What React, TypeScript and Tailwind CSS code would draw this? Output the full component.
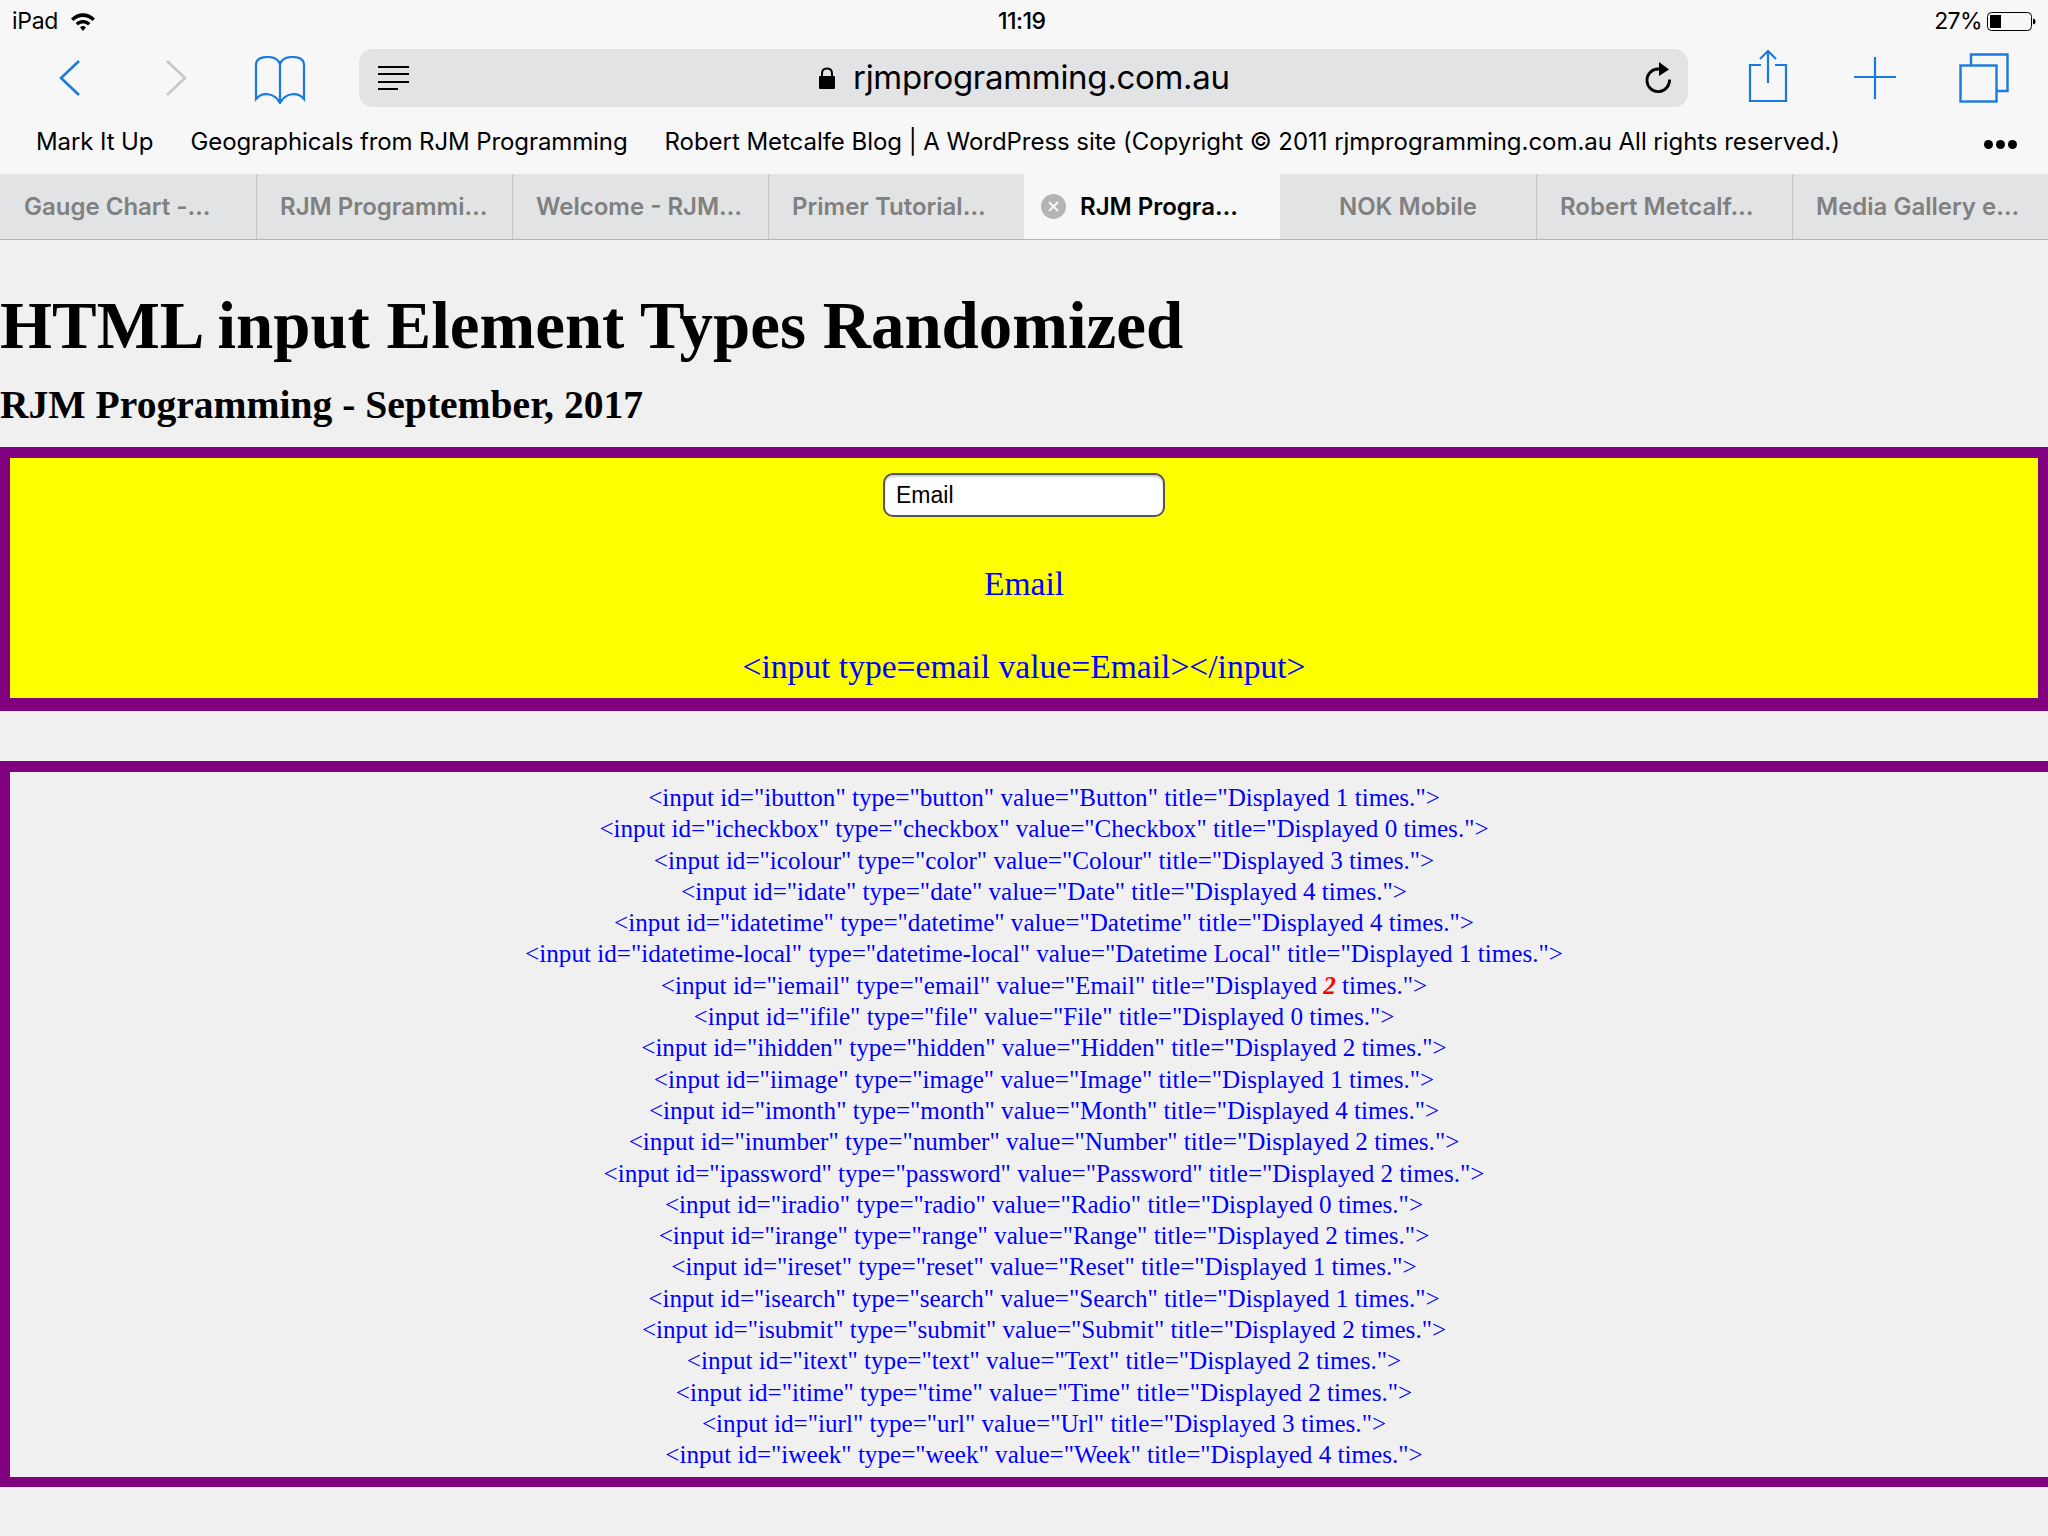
const rows: [string, string, string, string, string][] = [
  ["ibutton", "button", "Button", "1", ""],
  ["icheckbox", "checkbox", "Checkbox", "0", ""],
  ["icolour", "color", "Colour", "3", ""],
  ["idate", "date", "Date", "4", ""],
  ["idatetime", "datetime", "Datetime", "4", ""],
  ["idatetime-local", "datetime-local", "Datetime Local", "1", ""],
  ["iemail", "email", "Email", "2", "red"],
  ["ifile", "file", "File", "0", ""],
  ["ihidden", "hidden", "Hidden", "2", ""],
  ["iimage", "image", "Image", "1", ""],
  ["imonth", "month", "Month", "4", ""],
  ["inumber", "number", "Number", "2", ""],
  ["ipassword", "password", "Password", "2", ""],
  ["iradio", "radio", "Radio", "0", ""],
  ["irange", "range", "Range", "2", ""],
  ["ireset", "reset", "Reset", "1", ""],
  ["isearch", "search", "Search", "1", ""],
  ["isubmit", "submit", "Submit", "2", ""],
  ["itext", "text", "Text", "2", ""],
  ["itime", "time", "Time", "2", ""],
  ["iurl", "url", "Url", "3", ""],
  ["iweek", "week", "Week", "4", ""],
];

const tabs = [
  "Gauge Chart -…",
  "RJM Programmi…",
  "Welcome - RJM…",
  "Primer Tutorial…",
  "RJM Progra…",
  "NOK Mobile",
  "Robert Metcalf…",
  "Media Gallery e…",
];

const BLUE = "#1a7ae0";

export default function App() {
  return (
    <div className="w-[2048px] h-[1536px] overflow-hidden bg-[#f0f0f0] font-['Liberation_Serif',serif]">
      <div className="bg-[#f7f7f7] font-['Inter',sans-serif] text-black">
        {/* status bar */}
        <div className="h-[49px] relative flex items-center text-[23px] pb-[6px]">
          <span className="ml-[12px] tracking-[-0.3px]">iPad</span>
          <svg className="ml-[12px]" width="26" height="20" viewBox="0 0 26 20" fill="#000">
            <path d="M1 6.5C8 -0.5 18 -0.5 25 6.5L22.6 9C17 3.6 9 3.6 3.4 9Z" />
            <path d="M5.6 11C10 7 16 7 20.4 11L18 13.4C15 10.8 11 10.8 8 13.4Z" />
            <path d="M10 15.2C12 13.6 14 13.6 16 15.2L13 19Z" />
          </svg>
          <span className="absolute left-[998px] font-medium tracking-[-0.5px]">11:19</span>
          <span className="ml-auto tracking-[-0.6px]">27%</span>
          <svg className="ml-[5px] mr-[11px]" width="50" height="20" viewBox="0 0 50 20">
            <rect x="0.5" y="0.5" width="44" height="18" rx="4" fill="none" stroke="#000" />
            <rect x="3" y="3" width="11" height="13" fill="#000" />
            <path d="M46 6.5C48 7 48.5 8 48.5 9.5C48.5 11 48 12 46 12.5Z" fill="#000" />
          </svg>
        </div>

        {/* toolbar */}
        <div className="h-[58px] flex items-center">
          <svg className="ml-[59px]" width="21" height="36" viewBox="0 0 21 36" fill="none" stroke={BLUE} strokeWidth="2.6">
            <path d="M20 1L2 18L20 35" />
          </svg>
          <svg className="ml-[86px]" width="21" height="36" viewBox="0 0 21 36" fill="none" stroke="#c8c8c8" strokeWidth="2.6">
            <path d="M1 1L19 18L1 35" />
          </svg>
          <svg className="ml-[67px] mt-[3px]" width="52" height="48" viewBox="0 0 52 48" fill="none" stroke={BLUE} strokeWidth="2.2">
            <path d="M26 8C24 3 20 1 14 1C7 1 2 3 2 9V43C8 36 20 36 26 47C32 36 44 36 50 43V9C50 3 45 1 38 1C32 1 28 3 26 8V47" />
          </svg>
          <div className="ml-[53px] w-[1329px] h-[58px] bg-[#e2e3e5] rounded-[14px] flex items-center relative">
            <svg className="ml-[19px]" width="31" height="24" viewBox="0 0 31 24" fill="none" stroke="#000" strokeWidth="1.8">
              <path d="M0 1H31M0 8H31M0 16H31M0 23H20" />
            </svg>
            <svg className="ml-[409px]" width="18" height="22" viewBox="0 0 18 22">
              <path d="M4 10V6.5C4 3.5 6 1.5 9 1.5C12 1.5 14 3.5 14 6.5V10" fill="none" stroke="#000" strokeWidth="2" />
              <rect x="1" y="9" width="16" height="13" rx="1" fill="#000" />
            </svg>
            <span className="ml-[17px] text-[33px] tracking-[-0.3px]">rjmprogramming.com.au</span>
            <svg className="ml-auto mr-[14px]" width="30" height="32" viewBox="0 0 30 32" fill="none">
              <path d="M25.5 17.5A11.3 11.3 0 1 1 14 7H17" stroke="#000" strokeWidth="2.8" />
              <path d="M15 0L25 7.5L15 14Z" fill="#000" />
            </svg>
          </div>
          <svg className="ml-[60px] mb-[5px]" width="40" height="54" viewBox="0 0 40 54" fill="none" stroke={BLUE} strokeWidth="2.2">
            <path d="M13 16H2V52H38V16H27" />
            <path d="M20 34V2M12 10L20 2L28 10" />
          </svg>
          <svg className="ml-[65px]" width="44" height="44" viewBox="0 0 44 44" fill="none" stroke={BLUE} strokeWidth="2.2">
            <path d="M22 1V43M1 21H43" />
          </svg>
          <svg className="ml-[62px]" width="50" height="50" viewBox="0 0 50 50" fill="none" stroke={BLUE} strokeWidth="2.4">
            <rect x="1.5" y="12.5" width="36" height="36" />
            <path d="M12 12V1.5H48.5V38H38" />
          </svg>
        </div>

        {/* bookmarks */}
        <div className="h-[67px] flex items-center text-[24px] tracking-[-0.1px] relative pt-[2px]">
          <span className="ml-[36px]">Mark It Up</span>
          <span className="ml-[37px]">Geographicals from RJM Programming</span>
          <span className="ml-[37px] tracking-[-0.04px]">Robert Metcalfe Blog | A WordPress site (Copyright © 2011 rjmprogramming.com.au All rights reserved.)</span>
          <span className="absolute left-[1984px] top-[33px] flex gap-[3px]">
            <span className="w-[9px] h-[9px] rounded-full bg-black" />
            <span className="w-[9px] h-[9px] rounded-full bg-black" />
            <span className="w-[9px] h-[9px] rounded-full bg-black" />
          </span>
        </div>

        {/* tabs */}
        <div className="h-[66px] flex border-b border-[#b4b4b4] text-[24px] font-semibold text-[#808080]">
          {tabs.map((t, i) => {
            const active = i === 4;
            const leftRule = i === 1 || i === 2 || i === 3 || i === 6 || i === 7;
            return (
              <div
                key={t}
                className={
                  "w-[256px] flex items-center whitespace-nowrap " +
                  (active ? "bg-[#f7f7f7] text-black pl-[17px] " : "bg-[#e2e3e5] ") +
                  (i === 5 ? "justify-center " : active ? "" : leftRule ? "pl-[23px] " : "pl-[24px] ") +
                  (leftRule ? "border-l border-[#c4c4c4]" : "")
                }
              >
                {active && (
                  <svg className="mr-[14px]" width="25" height="25" viewBox="0 0 25 25">
                    <circle cx="12.5" cy="12.5" r="12.5" fill="#b4b4b4" />
                    <path d="M8 8L17 17M17 8L8 17" stroke="#f7f7f7" strokeWidth="2" />
                  </svg>
                )}
                {t}
              </div>
            );
          })}
        </div>
      </div>

      {/* page */}
      <h1 className="m-0 mt-[50px] text-[66.9px] leading-[70px] font-bold text-black whitespace-nowrap">HTML input Element Types Randomized</h1>
      <h2 className="m-0 mt-[20px] text-[39.6px] leading-[50px] font-bold text-black whitespace-nowrap">RJM Programming - September, 2017</h2>

      <div className="mt-[17px] border-x-[10px] border-t-[11px] border-b-[13px] border-[#800080] bg-[#ffff00] h-[264px] flex flex-col items-center text-[#0000ff]">
        <div className="mt-[15px] w-[282px] h-[44px] bg-white border-2 border-[#555] rounded-[10px] shadow-[inset_0_2px_2px_rgba(0,0,0,0.2)] flex items-center pl-[11px] text-[23px] text-black font-['Liberation_Sans',sans-serif]">
          Email
        </div>
        <div className="mt-[47px] text-[33.6px] leading-[40px]">Email</div>
        <div className="mt-[43px] text-[33.6px] leading-[40px]">{"<input type=email value=Email></input>"}</div>
      </div>

      <div className="mt-[50px] w-[2088px] border-x-[10px] border-t-[11px] border-b-[10px] border-[#800080] h-[726px] pt-[10px] text-[25.14px] leading-[31.3px] text-center text-[#0000ff]">
        {rows.map(([id, type, value, n, red]) => (
          <div key={id}>
            {`<input id="${id}" type="${type}" value="${value}" title="Displayed `}
            {red ? <b className="italic text-[#ff0000]">{n}</b> : n}
            {` times.">`}
          </div>
        ))}
      </div>
    </div>
  );
}
